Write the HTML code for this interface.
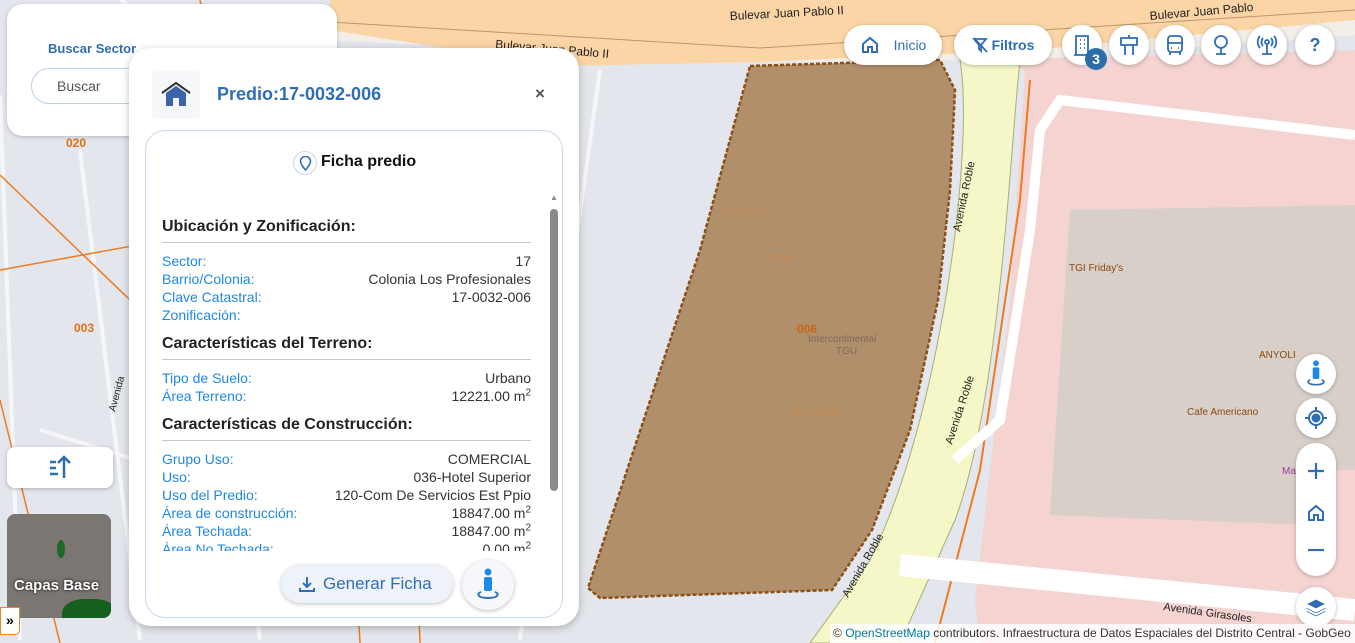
<!DOCTYPE html>
<html><head><meta charset="utf-8"><style>
*{box-sizing:border-box;margin:0;padding:0}
body{width:1355px;height:643px;overflow:hidden;position:relative;font-family:"Liberation Sans",Arial,sans-serif;background:#e4e6ea}
.abs{position:absolute}
.btn{position:absolute;background:#fff;border-radius:50%;width:40px;height:40px;box-shadow:0 1px 4px rgba(0,0,0,.25);display:flex;align-items:center;justify-content:center}
.pill{position:absolute;background:#fff;border-radius:20px;height:40px;box-shadow:0 1px 4px rgba(0,0,0,.25);display:flex;align-items:center;justify-content:center;color:#2f6eb5;font-size:14px}
.row{display:flex;justify-content:space-between;font-size:14px;line-height:18px;color:#333}
.row span:first-child{color:#1e88e5}
h3{font-size:16px;color:#222;font-weight:bold;padding-bottom:6px;border-bottom:1px solid #c8c8c8;margin-bottom:9px}
sup{font-size:10px;line-height:0}
</style></head><body>
<svg class="abs" style="left:0;top:0" width="1355" height="643">
<rect width="1355" height="643" fill="#e3e6ec"/>
<polygon points="330,0 1355,0 1355,35 1020,60 750,62 330,40" fill="#f3efe8"/>
<polygon points="330,0 1355,0 1355,20 1030,50 760,62 560,66 330,30" fill="#fbd5a5"/>
<path d="M330,22 L760,48 L1355,10" stroke="#b9976a" stroke-width="1" fill="none"/>
<path d="M0,95 L20,640 M80,150 L140,640 M200,180 L260,640 M120,0 L330,140 M40,430 L330,520 M600,70 L520,640" stroke="#f6f6f8" stroke-width="4" fill="none"/>
<polygon points="1000,60 1355,50 1355,643 980,643 975,600 990,470 1010,300 1025,70" fill="#f4d3d1"/>
<polygon points="1070,210 1355,205 1355,470 1330,470 1310,525 1050,515" fill="#d8cfc9"/>
<path d="M1030,80 L1020,200 L980,470 L935,643" stroke="#f07a20" stroke-width="2" fill="none"/>
<path d="M960,60 C975,150 940,420 870,560 L810,643 L900,643 L955,520 C1000,400 1010,150 1020,60Z" fill="#f5f7c8" stroke="#a8b070" stroke-width="1"/>
<path d="M1355,135 L1060,100 L1040,130 L1030,230 L1000,420 L955,460" stroke="#fff" stroke-width="10" fill="none"/>
<path d="M900,565 L1355,610" stroke="#fff" stroke-width="22" fill="none"/>
<path d="M0,175 L130,300 M0,270 L330,210 M0,400 L60,643 M200,0 L240,200 M335,195 L360,643 M400,140 L420,643" stroke="#f07a20" stroke-width="1.5" fill="none"/>
<polygon points="750,66 940,60 955,90 950,190 938,300 910,430 872,530 832,590 600,598 588,588 700,250" fill="#a97f55" fill-opacity=".85" stroke="#8a4f15" stroke-width="2.5" stroke-dasharray="4,2"/>
<text x="797" y="333" font-size="12" font-weight="bold" fill="#c86518">006</text>
<text x="808" y="342" font-size="10" fill="#7c6a5a">Intercontinental</text>
<text x="836" y="354" font-size="10" fill="#7c6a5a">TGU</text>
<text x="718" y="215" font-size="10" fill="#c38a50">The Factory</text>
<text x="774" y="260" font-size="10" fill="#c38a50">Nau</text>
<text x="790" y="415" font-size="10" fill="#c38a50">The Market</text>
<text x="1069" y="271" font-size="10" fill="#8a4a10">TGI Friday's</text>
<text x="1259" y="358" font-size="10" fill="#8a4a10">ANYOLI</text>
<text x="1187" y="415" font-size="10" fill="#8a4a10">Cafe Americano</text>
<text x="66" y="147" font-size="12" font-weight="bold" fill="#e46e10">020</text>
<text x="74" y="332" font-size="12" font-weight="bold" fill="#e46e10">003</text>
<text x="730" y="20" font-size="12" fill="#222" transform="rotate(-3 730 20)">Bulevar Juan Pablo II</text>
<text x="1150" y="20" font-size="12" fill="#222" transform="rotate(-5 1150 20)">Bulevar Juan Pablo</text>
<text x="495" y="48" font-size="12" fill="#222" transform="rotate(5 495 48)">Bulevar Juan Pablo II</text>
<text x="960" y="232" font-size="11" fill="#222" transform="rotate(-78 960 232)">Avenida Roble</text>
<text x="952" y="445" font-size="11" fill="#222" transform="rotate(-72 952 445)">Avenida Roble</text>
<text x="848" y="598" font-size="11" fill="#222" transform="rotate(-60 848 598)">Avenida Roble</text>
<text x="1163" y="610" font-size="11" fill="#222" transform="rotate(8 1163 610)">Avenida Girasoles</text>
<text x="1282" y="474" font-size="10" fill="#9a3aa0">Ma</text>
<text x="115" y="412" font-size="10" fill="#222" transform="rotate(-75 115 412)">Avenida</text>
</svg>

<div class="abs" style="left:7px;top:4px;width:330px;height:132px;background:#fff;border-radius:16px;box-shadow:0 1px 4px rgba(0,0,0,.2)">
<div class="abs" style="left:41px;top:37px;font-size:13px;font-weight:bold;color:#2f6eb5">Buscar Sector</div>
<div class="abs" style="left:24px;top:64px;width:200px;height:36px;border:1px solid #bcd0ea;border-radius:18px;font-size:14px;color:#555;padding:9px 0 0 25px">Buscar</div>
</div>

<div class="abs" style="left:7px;top:447px;width:106px;height:41px;background:#fff;border-radius:8px;box-shadow:0 1px 4px rgba(0,0,0,.25)">
<svg class="abs" style="left:40px;top:7px" width="26" height="26" viewBox="0 0 26 26" fill="none" stroke="#2f6eb5" stroke-width="2.5"><path d="M3 8h6M3 14h6M3 20h8M17 24V3M11 9l6-6 6 6"/></svg>
</div>
<div class="abs" style="left:7px;top:514px;width:104px;height:104px;background:#7b7672;border-radius:8px;overflow:hidden">
<div class="abs" style="left:55px;top:85px;width:55px;height:35px;background:#15601e;border-radius:40%"></div>
<div class="abs" style="left:50px;top:26px;width:8px;height:18px;background:#1d6a24;border-radius:50%"></div>
<div class="abs" style="left:7px;top:63px;font-size:15px;font-weight:bold;color:#fff;text-shadow:0 0 3px #000">Capas Base</div>
</div>
<div class="abs" style="left:0;top:607px;width:20px;height:28px;background:#fff;border:1px solid #e08a30;border-radius:0 0 5px 0;font-size:14px;font-weight:bold;padding:4px 0 0 5px">»</div>

<div class="abs" style="left:129px;top:48px;width:450px;height:578px;background:#fff;border-radius:22px;box-shadow:0 2px 8px rgba(0,0,0,.25)">
<div class="abs" style="left:23px;top:23px;width:48px;height:48px;background:#f5f7fa;border-radius:4px">
<svg class="abs" style="left:9px;top:10px" width="30" height="26" viewBox="0 0 30 26"><path d="M1 12L15 2 29 12" stroke="#333" stroke-width="2" fill="none"/><path d="M5 12L15 5 25 12V25H18V17H12V25H5Z" fill="#3b63a8"/></svg>
</div>
<div class="abs" style="left:88px;top:36px;font-size:18px;font-weight:bold;color:#2f6eb5">Predio:17-0032-006</div>
<div class="abs" style="left:406px;top:36px;font-size:17px;font-weight:bold;color:#555">×</div>
<div class="abs" style="left:16px;top:82px;width:418px;height:488px;border:1px solid #c8d8ee;border-radius:20px;overflow:hidden">
<div class="abs" style="left:147px;top:20px;width:24px;height:24px;border:1px solid #c8d8ee;border-radius:50%">
<svg class="abs" style="left:5px;top:4px" width="13" height="15" viewBox="0 0 13 15"><path d="M6.5 14C3 10 1.5 7.5 1.5 5.5a5 5 0 0110 0c0 2-1.5 4.5-5 8.5z" stroke="#2f6eb5" stroke-width="1.6" fill="none"/></svg>
</div>
<div class="abs" style="left:175px;top:22px;font-size:16px;font-weight:bold;color:#111">Ficha predio</div>
<div class="abs" style="left:16px;top:87px;width:369px">
<h3>Ubicación y Zonificación:</h3>
<div class="row"><span>Sector:</span><span>17</span></div>
<div class="row"><span>Barrio/Colonia:</span><span>Colonia Los Profesionales</span></div>
<div class="row"><span>Clave Catastral:</span><span>17-0032-006</span></div>
<div class="row"><span>Zonificación:</span><span></span></div>
<h3 style="margin-top:11px">Características del Terreno:</h3>
<div class="row"><span>Tipo de Suelo:</span><span>Urbano</span></div>
<div class="row"><span>Área Terreno:</span><span>12221.00 m<sup>2</sup></span></div>
<h3 style="margin-top:11px">Características de Construcción:</h3>
<div class="row"><span>Grupo Uso:</span><span>COMERCIAL</span></div>
<div class="row"><span>Uso:</span><span>036-Hotel Superior</span></div>
<div class="row"><span>Uso del Predio:</span><span>120-Com De Servicios Est Ppio</span></div>
<div class="row"><span>Área de construcción:</span><span>18847.00 m<sup>2</sup></span></div>
<div class="row"><span>Área Techada:</span><span>18847.00 m<sup>2</sup></span></div>
<div class="row" style="height:11px;overflow:hidden"><span>Área No Techada:</span><span>0.00 m<sup>2</sup></span></div>
</div>
<div class="abs" style="left:404px;top:62px;width:8px;height:350px">
<div class="abs" style="left:0;top:0;font-size:8px;color:#888">▲</div>
<div class="abs" style="left:0;top:16px;width:8px;height:282px;background:#8a8a8a;border-radius:4px"></div>
</div>
<div class="abs" style="left:135px;top:434px;width:172px;height:38px;background:#eef3f9;border-radius:19px;box-shadow:0 1px 4px rgba(0,0,0,.25);color:#2f6eb5;font-size:17px;padding:9px 0 0 42px">Generar Ficha
<svg class="abs" style="left:17px;top:10px" width="18" height="18" viewBox="0 0 18 18" fill="none" stroke="#2f6eb5" stroke-width="2"><path d="M9 2v10M5 8l4 4 4-4M2 13v3h14v-3"/></svg></div>
<div class="abs" style="left:316px;top:429px;width:52px;height:50px;background:#f5f7fa;border-radius:50%;box-shadow:0 1px 4px rgba(0,0,0,.25)">
<svg class="abs" style="left:13px;top:8px" width="26" height="34" viewBox="0 0 26 34"><circle cx="13" cy="4" r="3.5" fill="#1e88e5"/><rect x="9" y="9" width="8" height="14" rx="2" fill="#1e88e5"/><path d="M6 24c-5 2-3 6 7 6s12-4 7-6" stroke="#2f6eb5" stroke-width="2" fill="none"/></svg>
</div>
</div>
</div>

<div class="pill" style="left:844px;top:25px;width:98px"><svg width="20" height="20" viewBox="0 0 20 20" fill="none" stroke="#2f6eb5" stroke-width="2"><path d="M3 9L10 3l7 6v8h-5v-5H8v5H3z"/></svg><span style="margin-left:14px">Inicio</span></div>
<div class="pill" style="left:954px;top:25px;width:98px;font-weight:bold"><svg width="16" height="16" viewBox="0 0 16 16" fill="none" stroke="#2f6eb5" stroke-width="1.8"><path d="M2 2h12l-5 6v6l-2-2V8zM2 1l13 14"/></svg><span style="margin-left:4px">Filtros</span></div>
<div class="btn" style="left:1062px;top:25px"><svg width="20" height="22" viewBox="0 0 20 22" fill="none" stroke="#2f6eb5" stroke-width="1.8"><path d="M4 21V2h12v19M2 21h16M8 6h1M12 6h1M8 10h1M12 10h1M8 14h1M12 14h1"/></svg></div>
<div class="abs" style="left:1085px;top:48px;width:22px;height:22px;border-radius:50%;background:#2c6eaa;color:#fff;font-weight:bold;font-size:14px;text-align:center;line-height:22px">3</div>
<div class="btn" style="left:1109px;top:25px"><svg width="20" height="22" viewBox="0 0 20 22" fill="none" stroke="#2f6eb5" stroke-width="1.8"><path d="M10 1v3M2 4h16v7H2zM6 11v10M14 11v10"/></svg></div>
<div class="btn" style="left:1155px;top:25px"><svg width="20" height="22" viewBox="0 0 20 22" fill="none" stroke="#2f6eb5" stroke-width="1.8"><rect x="3" y="2" width="14" height="16" rx="3"/><path d="M3 9h14M6 14h1M13 14h1M5 18v3M15 18v3"/></svg></div>
<div class="btn" style="left:1201px;top:25px"><svg width="20" height="22" viewBox="0 0 20 22" fill="none" stroke="#2f6eb5" stroke-width="1.8"><path d="M10 2c-4 0-6 3-6 6 0 3 3 6 6 6s6-3 6-6c0-3-2-6-6-6zM10 14v6M5 20h10"/></svg></div>
<div class="btn" style="left:1247px;top:25px"><svg width="22" height="22" viewBox="0 0 22 22" fill="none" stroke="#2f6eb5" stroke-width="1.8"><circle cx="11" cy="8" r="2"/><path d="M7 4a6 6 0 000 8M15 4a6 6 0 010 8M4 2a9 9 0 000 12M18 2a9 9 0 010 12M11 10v10M6 20h10"/></svg></div>
<div class="btn" style="left:1295px;top:25px;color:#2f6eb5;font-weight:bold;font-size:18px">?</div>

<div class="btn" style="left:1296px;top:354px"><svg width="22" height="28" viewBox="0 0 26 34"><circle cx="13" cy="4" r="3.5" fill="#1e88e5"/><rect x="9" y="9" width="8" height="14" rx="2" fill="#1e88e5"/><path d="M6 24c-5 2-3 6 7 6s12-4 7-6" stroke="#2f6eb5" stroke-width="2" fill="none"/></svg></div>
<div class="btn" style="left:1296px;top:398px"><svg width="24" height="24" viewBox="0 0 24 24" fill="none" stroke="#2f6eb5" stroke-width="2"><circle cx="12" cy="12" r="7"/><circle cx="12" cy="12" r="3.5" fill="#2f6eb5"/><path d="M12 1v4M12 19v4M1 12h4M19 12h4"/></svg></div>
<div class="abs" style="left:1296px;top:443px;width:40px;height:133px;background:#fff;border-radius:20px;box-shadow:0 1px 4px rgba(0,0,0,.25)">
<svg class="abs" style="left:10px;top:18px" width="20" height="20" fill="none" stroke="#2f6eb5" stroke-width="2.2"><path d="M10 2v16M2 10h16"/></svg>
<svg class="abs" style="left:10px;top:60px" width="20" height="20" viewBox="0 0 20 20" fill="none" stroke="#2f6eb5" stroke-width="2"><path d="M3 9L10 3l7 6v8h-5v-5H8v5H3z"/></svg>
<svg class="abs" style="left:10px;top:97px" width="20" height="20" fill="none" stroke="#2f6eb5" stroke-width="2.2"><path d="M2 10h16"/></svg>
</div>
<div class="btn" style="left:1296px;top:587px"><svg width="22" height="20" viewBox="0 0 22 20" fill="#2f6eb5" stroke="#fff" stroke-width="1"><path d="M11 12L1 7l10-5 10 5z"/><path d="M1 10l10 5 10-5v2l-10 5-10-5z"/><path d="M1 13l10 5 10-5v2l-10 5-10-5z"/></svg></div>
<div class="abs" style="left:830px;top:624px;width:525px;height:19px;background:rgba(255,255,255,.85);font-size:12px;color:#333;padding:2px 0 0 3px;white-space:nowrap">© <span style="color:#0078a8">OpenStreetMap</span> contributors. Infraestructura de Datos Espaciales del Distrito Central - GobGeo</div>
</body></html>
